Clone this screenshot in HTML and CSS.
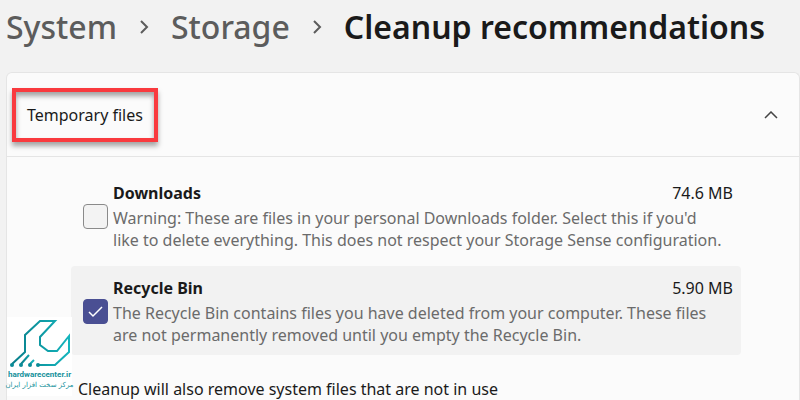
FILE: index.html
```html
<!DOCTYPE html>
<html lang="en">
<head>
    <meta charset="UTF-8">
    <meta name="viewport" content="width=device-width, initial-scale=1.0">
    <title>Cleanup recommendations</title>
    <link rel="stylesheet" href="styles.css">
</head>
<body>
    <nav class="breadcrumb">
        <a href="#">System</a>
        <svg class="separator" viewBox="0 0 10 14"><path d="M2 1l6 6-6 6"/></svg>
        <a href="#">Storage</a>
        <svg class="separator" viewBox="0 0 10 14"><path d="M2 1l6 6-6 6"/></svg>
        <h1>Cleanup recommendations</h1>
    </nav>

    <main class="card">
        <button type="button" class="card-header" aria-expanded="true">
            <span class="highlight">Temporary files</span>
            <svg class="chevron" viewBox="0 0 14 8"><path d="M1 7l6-6 6 6"/></svg>
        </button>

        <div class="card-body">
            <div class="item">
                <input type="checkbox" id="downloads">
                <label for="downloads">
                    <span class="item-title"><b>Downloads</b><span>74.6 MB</span></span>
                    <span class="item-text">Warning: These are files in your personal Downloads folder. Select this if you'd<br>like to delete everything. This does not respect your Storage Sense configuration.</span>
                </label>
            </div>
            <div class="item selected">
                <input type="checkbox" id="recycle-bin" checked>
                <label for="recycle-bin">
                    <span class="item-title"><b>Recycle Bin</b><span>5.90 MB</span></span>
                    <span class="item-text">The Recycle Bin contains files you have deleted from your computer. These files<br>are not permanently removed until you empty the Recycle Bin.</span>
                </label>
            </div>
            <p class="note">Cleanup will also remove system files that are not in use</p>
        </div>
    </main>

    <div class="watermark">
        <svg viewBox="0 0 65 53">
            <defs>
                <linearGradient id="teal" x1="0" y1="0" x2="1" y2="0">
                    <stop offset="0" stop-color="#087d89"/>
                    <stop offset="1" stop-color="#14b5bd"/>
                </linearGradient>
            </defs>
            <g fill="none" stroke="url(#teal)" stroke-width="2">
                <path d="M5 47L18 35V18L33 4H48L33 20V28L41 34H50L62 19V35L48 48H31"/>
                <path d="M14 47L22 38M23 47L27 43"/>
            </g>
            <g fill="#0b8c98">
                <circle cx="5" cy="48" r="2"/>
                <circle cx="14" cy="48" r="2"/>
                <circle cx="23" cy="48" r="2"/>
                <circle cx="31" cy="48" r="2"/>
            </g>
        </svg>
        <b>hardwarecenter.ir</b>
        <span lang="fa" dir="rtl">مرکز سخت افزار ایران</span>
    </div>
</body>
</html>
```
FILE: styles.css
```css
* {
    box-sizing: border-box;
}

body {
    display: flex;
    flex-direction: column;
    min-height: 100vh;
    margin: 0;
    padding-left: 6px;
    background-color: #f2f2f2;
    color: #1a1a1a;
    font-family: "Noto Sans", "Open Sans", sans-serif;
    font-size: 16px;
    line-height: 22px;
}

.breadcrumb {
    display: flex;
    align-items: center;
    gap: 22px;
    height: 72px;
    padding-bottom: 18px;
    font-size: 32px;
    line-height: 40px;
    font-weight: 500;
    white-space: nowrap;
}

.breadcrumb a {
    color: #5c5c5c;
    text-decoration: none;
}

.breadcrumb h1 {
    margin: 0;
    font-size: 32px;
    font-weight: 600;
}

.separator {
    width: 10px;
    height: 14px;
    fill: none;
    stroke: #5c5c5c;
    stroke-width: 2;
}

.card {
    flex: 1;
    background-color: #fbfbfb;
    border: 1px solid #e5e5e5;
    border-bottom: none;
    border-radius: 6px 6px 0 0;
}

.card-header {
    display: flex;
    align-items: center;
    justify-content: space-between;
    width: 100%;
    height: 84px;
    padding: 0 21px 0 5px;
    background: none;
    border: none;
    border-bottom: 1px solid #e5e5e5;
    color: inherit;
    font: inherit;
}

.highlight {
    padding: 12px 11px;
    border: 4px solid #f93a3e;
    box-shadow: 0 4px 5px rgba(0, 0, 0, 0.35), inset 0 4px 5px rgba(0, 0, 0, 0.35);
}

.chevron {
    width: 14px;
    height: 8px;
    fill: none;
    stroke: #444;
    stroke-width: 1.5;
}

.card-body {
    display: flex;
    flex-direction: column;
    gap: 6px;
    padding: 14px 58px 0 64px;
}

.item {
    display: flex;
    align-items: center;
    gap: 5px;
    padding: 11px 8px 9px 12px;
    border-radius: 4px;
}

.item.selected {
    background-color: #f2f2f2;
}

.item label {
    flex: 1;
}

.item input {
    appearance: none;
    flex: none;
    width: 25px;
    height: 25px;
    margin: 0;
    background-color: #f3f3f3;
    border: 1px solid #8a8a8a;
    border-radius: 4px;
}

.item input:checked {
    background: #4a4f93 url("data:image/svg+xml,%3Csvg xmlns='http://www.w3.org/2000/svg' viewBox='0 0 25 25'%3E%3Cpath d='M6 13l4 4 9-9' fill='none' stroke='white' stroke-width='1.5'/%3E%3C/svg%3E") center / 25px 25px;
    border-color: #4a4f93;
}

.item-title {
    display: flex;
    justify-content: space-between;
    margin-bottom: 3px;
}

.item-text {
    color: #6b6b6b;
    white-space: nowrap;
}

.note {
    margin: 0;
    padding: 17px 0 0 7px;
}

.watermark {
    position: absolute;
    left: 7px;
    top: 317px;
    display: flex;
    flex-direction: column;
    align-items: center;
    width: 65px;
    padding-bottom: 6px;
    background-color: #fff;
    color: #15919b;
    font-family: Roboto, "DejaVu Sans", sans-serif;
    font-size: 8px;
    line-height: 10px;
    white-space: nowrap;
}

.watermark svg {
    width: 65px;
    height: 53px;
}

.watermark span {
    font-family: "DejaVu Sans", sans-serif;
    font-size: 7px;
}
```
